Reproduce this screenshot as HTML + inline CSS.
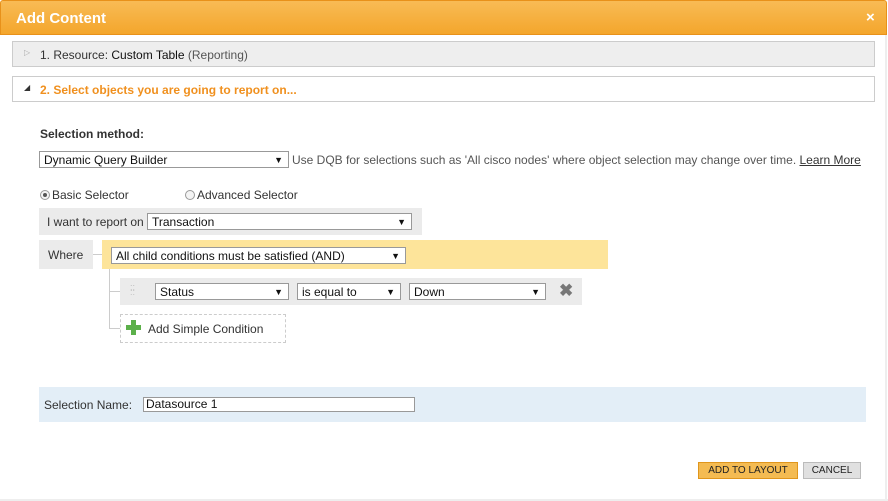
<!DOCTYPE html>
<html><head><meta charset="utf-8"><style>
*{box-sizing:border-box;margin:0;padding:0}
body{width:888px;height:501px;background:#fff;font-family:"Liberation Sans",Arial,sans-serif;font-size:12px;color:#222;position:relative;overflow:hidden}
.a{position:absolute}
.sel{position:absolute;border:1px solid #999;background:#fff;height:17px;font-size:12px;padding:2px 4px 0;line-height:13px;color:#111}
.sel:after{content:"▼";position:absolute;right:5px;top:2px;font-size:9px}
</style></head><body>
<div class="a" style="left:0;top:0;width:887px;height:35px;background:linear-gradient(#f8bb55,#f4a62c);border:1px solid #e8911a;border-radius:3px 3px 0 0"></div>
<div class="a" style="left:16px;top:10px;color:#fff;font-weight:bold;font-size:15px">Add Content</div>
<div class="a" style="left:866px;top:9px;color:#fff;font-weight:bold;font-size:15px">×</div>
<div class="a" style="left:885px;top:35px;width:2px;height:466px;background:#eee"></div>
<div class="a" style="left:0;top:499px;width:888px;height:2px;background:#eee"></div>

<div class="a" style="left:12px;top:41px;width:863px;height:26px;background:#eee;border:1px solid #ccc"></div>
<div class="a" style="left:24px;top:48px;color:#aaa;font-size:8px">▷</div>
<div class="a" style="left:40px;top:48px;color:#333">1. Resource: <span style="color:#111">Custom Table</span> <span style="color:#555">(Reporting)</span></div>
<div class="a" style="left:12px;top:76px;width:863px;height:26px;background:#fff;border:1px solid #ccc"></div>
<div class="a" style="left:24px;top:83px;color:#333;font-size:8px">◢</div>
<div class="a" style="left:40px;top:83px;color:#f0901e;font-weight:bold">2. Select objects you are going to report on...</div>

<div class="a" style="left:40px;top:127px;font-weight:bold;color:#333">Selection method:</div>
<div class="sel" style="left:39px;top:151px;width:250px">Dynamic Query Builder</div>
<div class="a" style="left:292px;top:153px;color:#555">Use DQB for selections such as 'All cisco nodes' where object selection may change over time. <span style="color:#333;text-decoration:underline">Learn More</span></div>

<div class="a" style="left:40px;top:190px;width:10px;height:10px;border:1px solid #999;border-radius:50%;background:#f4f4f4"><div style="width:4px;height:4px;margin:2px;border-radius:50%;background:#555"></div></div>
<div class="a" style="left:52px;top:188px;color:#333">Basic Selector</div>
<div class="a" style="left:185px;top:190px;width:10px;height:10px;border:1px solid #999;border-radius:50%;background:#f4f4f4"></div>
<div class="a" style="left:197px;top:188px;color:#333">Advanced Selector</div>

<div class="a" style="left:39px;top:208px;width:383px;height:27px;background:#ebebeb"></div>
<div class="a" style="left:47px;top:215px;color:#333">I want to report on</div>
<div class="sel" style="left:147px;top:213px;width:265px">Transaction</div>

<div class="a" style="left:39px;top:240px;width:54px;height:29px;background:#ebebeb"></div>
<div class="a" style="left:48px;top:248px;color:#333">Where</div>
<div class="a" style="left:93px;top:254px;width:9px;height:1px;background:#ccc"></div>
<div class="a" style="left:102px;top:240px;width:506px;height:29px;background:#fde49a"></div>
<div class="sel" style="left:111px;top:247px;width:295px">All child conditions must be satisfied (AND)</div>
<div class="a" style="left:109px;top:269px;width:1px;height:59px;background:#ccc"></div>
<div class="a" style="left:109px;top:291px;width:11px;height:1px;background:#ccc"></div>
<div class="a" style="left:109px;top:328px;width:11px;height:1px;background:#ccc"></div>
<div class="a" style="left:120px;top:278px;width:462px;height:27px;background:#ebebeb"></div>
<div class="a" style="left:130px;top:285px;color:#bbb;font-size:9px;line-height:5px">::<br>::</div>
<div class="sel" style="left:155px;top:283px;width:134px">Status</div>
<div class="sel" style="left:297px;top:283px;width:104px">is equal to</div>
<div class="sel" style="left:409px;top:283px;width:137px">Down</div>
<div class="a" style="left:559px;top:281px;color:#777;font-size:17px;font-weight:bold">✖</div>
<div class="a" style="left:120px;top:314px;width:166px;height:29px;border:1px dashed #ccc"></div>
<div class="a" style="left:126px;top:320px;width:14px;height:14px">
<div class="a" style="left:5px;top:0;width:5px;height:15px;background:#5cb04a"></div>
<div class="a" style="left:0;top:5px;width:15px;height:5px;background:#5cb04a"></div></div>
<div class="a" style="left:148px;top:322px;color:#333">Add Simple Condition</div>

<div class="a" style="left:39px;top:387px;width:827px;height:35px;background:#e3eef7"></div>
<div class="a" style="left:44px;top:398px;color:#333">Selection Name:</div>
<div class="a" style="left:143px;top:397px;width:272px;height:15px;border:1px solid #999;background:#fff;padding:0 2px;line-height:13px;color:#111">Datasource 1</div>

<div class="a" style="left:698px;top:462px;width:100px;height:17px;background:#f4bb52;border:1px solid #e0961c;font-size:10px;text-align:center;line-height:16px;color:#222">ADD TO LAYOUT</div>
<div class="a" style="left:803px;top:462px;width:58px;height:17px;background:#e0e0e0;border:1px solid #bbb;font-size:10px;text-align:center;line-height:16px;color:#222">CANCEL</div>
</body></html>
